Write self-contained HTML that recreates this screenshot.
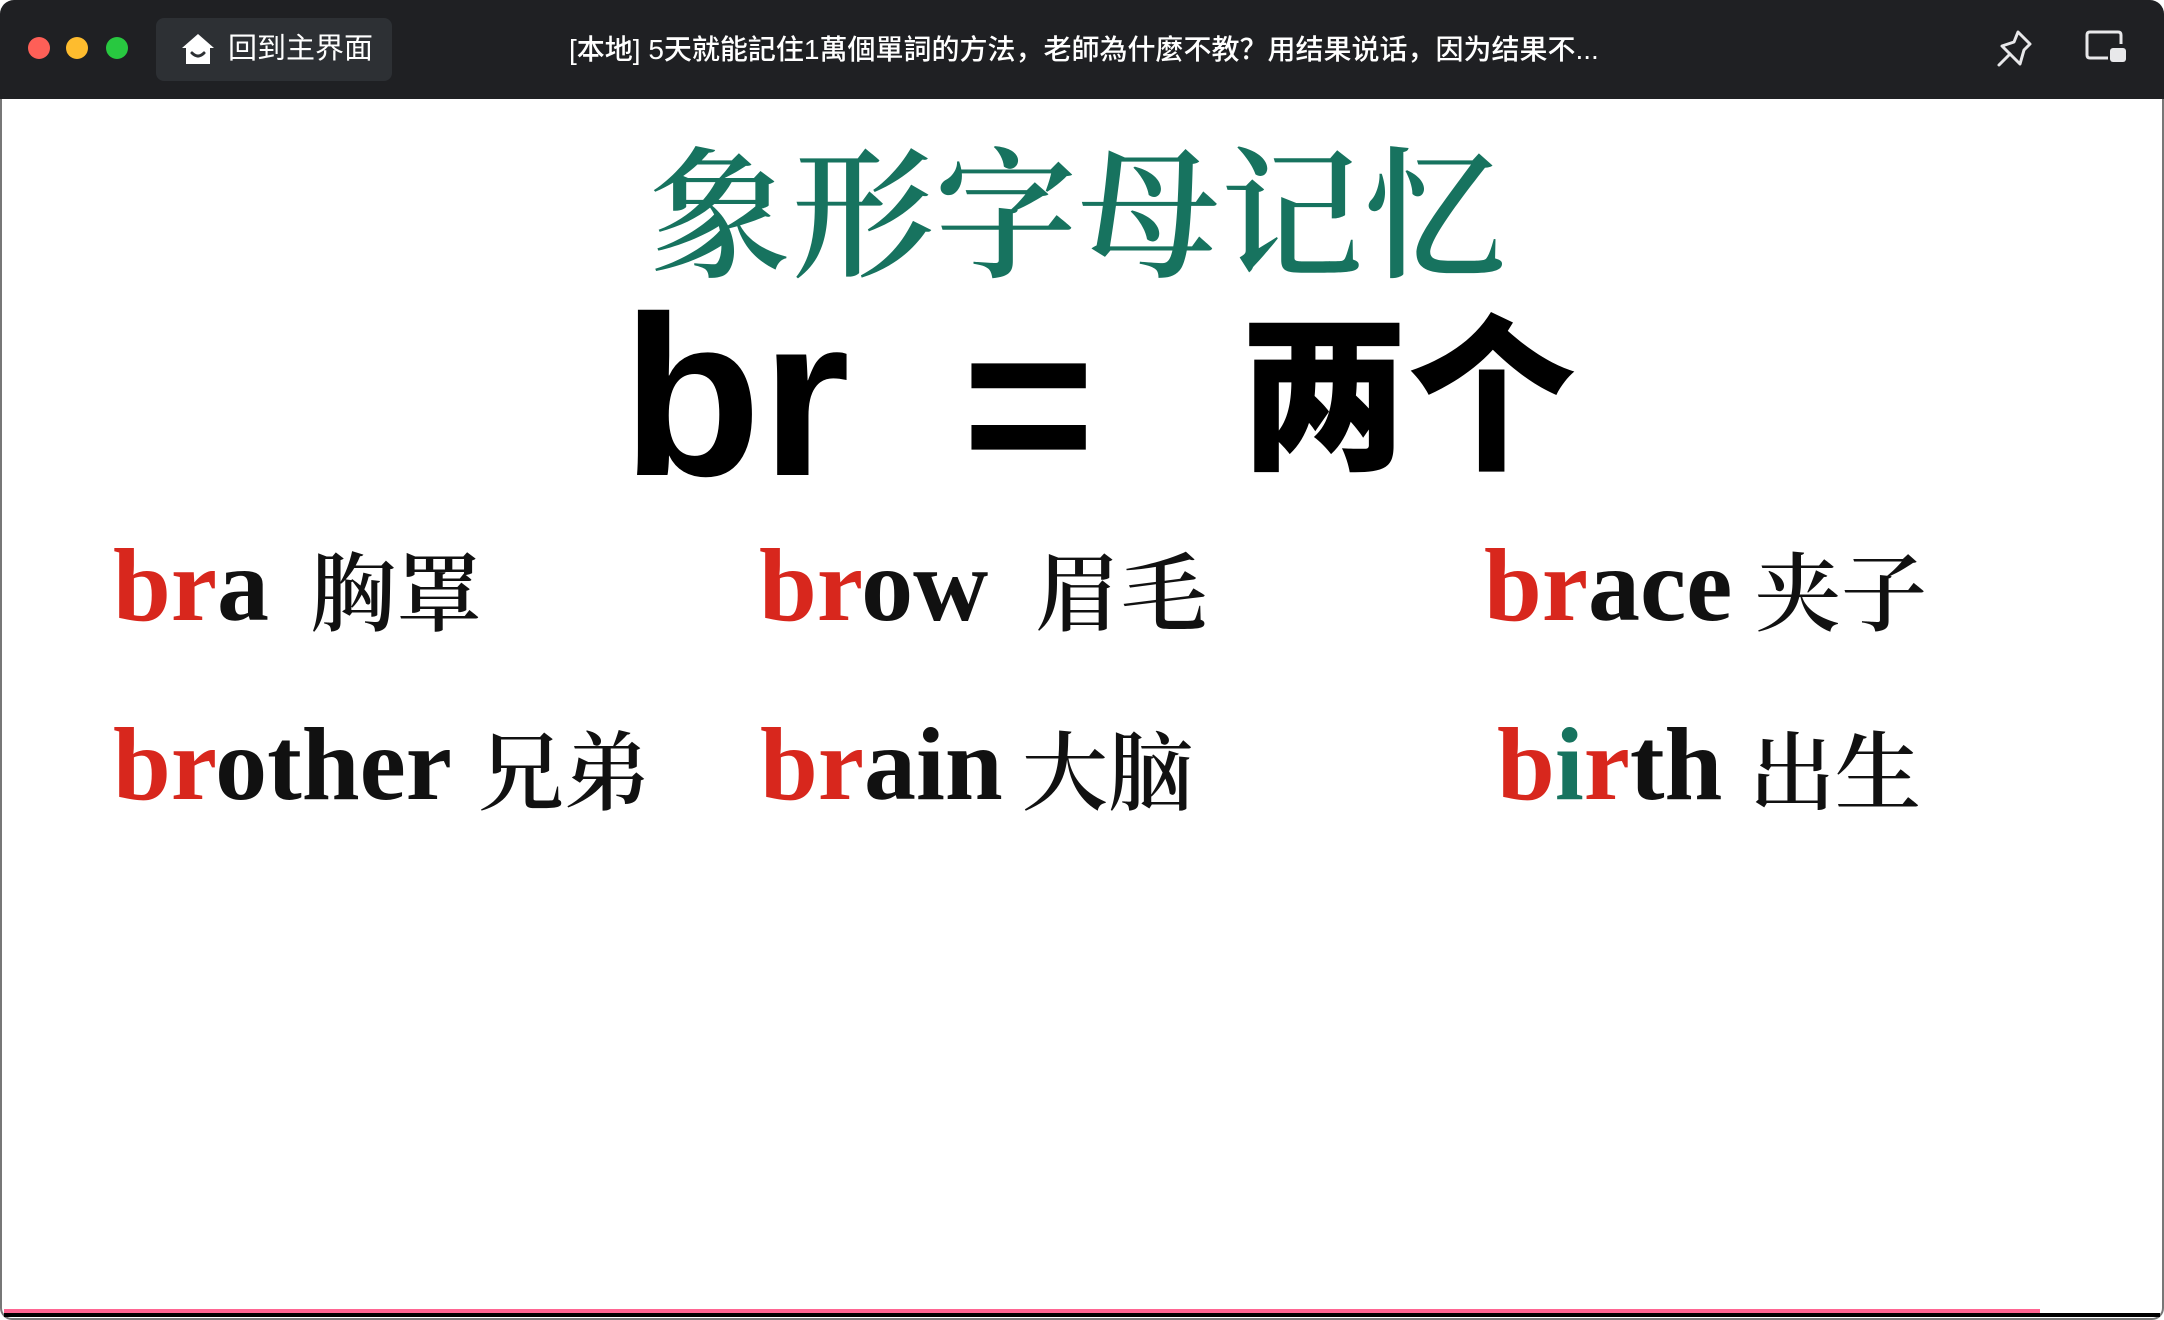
<!DOCTYPE html>
<html><head><meta charset="utf-8"><style>
*{margin:0;padding:0;box-sizing:border-box}
body{width:2164px;height:1320px;background:#fff;position:relative;overflow:hidden;font-family:"Liberation Sans","Noto Sans CJK SC",sans-serif}
.bar{position:absolute;left:0;top:0;width:2164px;height:99px;background:#1f2023;border-radius:14px 14px 0 0}
.dot{position:absolute;top:37px;width:22px;height:22px;border-radius:50%}
.home{position:absolute;left:156px;top:18px;width:236px;height:63px;background:#2d3034;border-radius:8px}
.home span{position:absolute;left:72px;top:13px;color:#fff;font-size:29px;line-height:36px}
.title{position:absolute;left:569px;top:30px;color:#fff;font-size:28px;line-height:40px;white-space:nowrap;font-weight:500}
.frame{position:absolute;left:0;top:99px;width:2164px;height:1221px;border:2px solid #777;border-top:none;border-radius:0 0 12px 12px}
.a{position:absolute;line-height:1;white-space:nowrap}
.h{font-family:"Noto Serif CJK SC",serif;font-weight:600;color:#17735f;font-size:142px;letter-spacing:1px}
.w{font-family:"Liberation Serif",serif;font-weight:700;font-size:104px;color:#111}
.c{font-family:"Noto Serif CJK SC",serif;font-weight:600;font-size:86px;color:#111}
.r{color:#d8271d}.t{color:#17735f}
</style></head><body>
<div class="bar">
<div class="dot" style="left:28px;background:#fe5f57"></div>
<div class="dot" style="left:66px;background:#febc2e"></div>
<div class="dot" style="left:106px;background:#28c840"></div>
<div class="home">
<svg style="position:absolute;left:24px;top:13px" width="36" height="36" viewBox="0 0 36 36"><path d="M18 3 L34 17 L30 17 L30 33 L6 33 L6 17 L2 17 Z" fill="#fff"/><path d="M12 22 Q18 28 24 22" stroke="#2d3034" stroke-width="3" fill="none" stroke-linecap="round"/></svg>
<span>回到主界面</span></div>
<div class="title">[本地] 5天就能記住1萬個單詞的方法，老師為什麼不教？用结果说话，因为结果不...</div>
<svg style="position:absolute;left:1994px;top:26px" width="44" height="44" viewBox="0 0 44 44" fill="none" stroke="#e8e8ea" stroke-width="3" stroke-linejoin="round" stroke-linecap="round"><path d="M24 6 L36 18 Q32 22 30 24 L26 38 L8 20 L20 16 Z"/><path d="M16 28 L5 39"/></svg>
<svg style="position:absolute;left:2084px;top:28px" width="48" height="42" viewBox="0 0 48 42" fill="none"><path d="M24 30 H6 Q3 30 3 27 V7 Q3 4 6 4 H34 Q37 4 37 7 V16" stroke="#e8e8ea" stroke-width="3"/><rect x="26" y="20" width="16" height="14" rx="3" fill="#e8e8ea"/></svg>
</div>
<div class="frame"></div>
<div class="a h" style="left:649px;top:134px">象形字母记忆</div>
<div class="a" style="left:622px;top:283px;font-size:228px;font-weight:700;color:#000">br</div>
<div class="a" style="left:962px;top:290px;font-size:228px;font-weight:700;color:#000">=</div>
<div class="a" style="left:1240px;top:300px;font-family:'Noto Sans CJK SC',sans-serif;font-weight:900;font-size:168px;color:#000">两个</div>

<div class="a w" style="left:113px;top:534px"><span class="r">br</span>a</div>
<div class="a c" style="left:310px;top:544px">胸罩</div>
<div class="a w" style="left:759px;top:534px"><span class="r">br</span>ow</div>
<div class="a c" style="left:1035px;top:544px">眉毛</div>
<div class="a w" style="left:1484px;top:534px"><span class="r">br</span>ace</div>
<div class="a c" style="left:1755px;top:544px">夹子</div>

<div class="a w" style="left:113px;top:713px"><span class="r">br</span>other</div>
<div class="a c" style="left:478px;top:723px">兄弟</div>
<div class="a w" style="left:760px;top:713px"><span class="r">br</span>ain</div>
<div class="a c" style="left:1022px;top:723px">大脑</div>
<div class="a w" style="left:1497px;top:713px"><span class="r">b</span><span class="t">i</span><span class="r">r</span>th</div>
<div class="a c" style="left:1749px;top:723px">出生</div>

<div style="position:absolute;left:4px;top:1309px;width:2036px;height:4px;background:#ff6592"></div>
<div style="position:absolute;left:4px;top:1313px;width:2156px;height:4px;background:#000"></div>
</body></html>
